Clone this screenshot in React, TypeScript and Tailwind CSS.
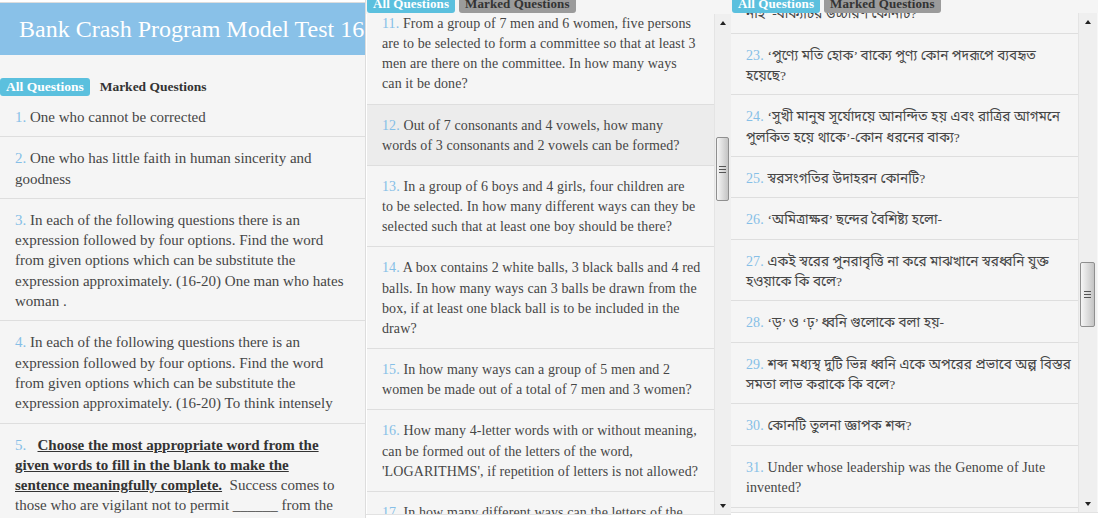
import React from 'react';

type Question = { n: number; lines: string[]; active?: boolean };

const Tabs: React.FC<{ grayMarked?: boolean; size: string }> = ({ grayMarked, size }) => (
  <div className={`flex gap-1 whitespace-nowrap ${size} font-bold leading-[18px]`}>
    <span className="rounded-[3px] bg-[#5bc0de] px-1.5 text-white">All Questions</span>
    <span className={grayMarked ? 'rounded-[3px] bg-[#9b9b9b] px-1.5 text-[#333]' : 'px-1.5 text-[#333]'}>
      Marked Questions
    </span>
  </div>
);

const Lines: React.FC<{ lines: string[] }> = ({ lines }) => (
  <>
    {lines.map((l, i) => (
      <React.Fragment key={i}>
        {i > 0 && <br />}
        {l}
      </React.Fragment>
    ))}
  </>
);

const QuestionRow: React.FC<Question & { leading: string; pad?: string; bangla?: boolean }> = ({
  n,
  lines,
  active,
  leading,
  pad = 'py-[10px]',
  bangla,
}) => (
  <div className={`border-b border-[#dedede] pl-[15px] pr-[6px] ${pad} ${leading} ${active ? 'bg-[#ececec]' : ''}`}>
    <span className="text-[#86bfe7]">{n}.</span>{' '}
    {bangla ? (
      <span className="text-[13.5px]">
        <Lines lines={lines} />
      </span>
    ) : (
      <Lines lines={lines} />
    )}
  </div>
);

const Arrow: React.FC<{ down?: boolean }> = ({ down }) => (
  <div className="flex h-[17px] items-center justify-center">
    <div
      className={
        down
          ? 'h-0 w-0 border-x-[3px] border-t-[4px] border-x-transparent border-t-[#222]'
          : 'h-0 w-0 border-x-[3px] border-b-[4px] border-x-transparent border-b-[#222]'
      }
    />
  </div>
);

// classic windows-style scrollbar, thumb placed by margin
const Scrollbar: React.FC<{ width: string; thumb: string }> = ({ width, thumb }) => (
  <div className={`flex ${width} shrink-0 flex-col border-l border-[#e4e4e4] bg-[#efefef]`}>
    <Arrow />
    <div className="flex-1 pl-px pr-[2px]">
      <div
        className={`${thumb} flex items-center justify-center rounded-[2px] border border-[#8f8f8f] bg-gradient-to-r from-[#f6f6f6] via-[#dddddd] to-[#c4c4c4]`}
      >
        <div className="flex flex-col gap-[2px]">
          <div className="h-px w-[7px] bg-[#555]" />
          <div className="h-px w-[7px] bg-[#555]" />
          <div className="h-px w-[7px] bg-[#555]" />
        </div>
      </div>
    </div>
    <Arrow down />
  </div>
);

const substituteIntro = [
  'In each of the following questions there is an',
  'expression followed by four options. Find the word',
  'from given options which can be substitute the',
];

const englishSet: Question[] = [
  { n: 1, lines: ['One who cannot be corrected'] },
  { n: 2, lines: ['One who has little faith in human sincerity and', 'goodness'] },
  { n: 3, lines: [...substituteIntro, 'expression approximately. (16-20) One man who hates', 'woman .'] },
  { n: 4, lines: [...substituteIntro, 'expression approximately. (16-20) To think intensely'] },
];

const mathSet: Question[] = [
  {
    n: 11,
    lines: [
      'From a group of 7 men and 6 women, five persons',
      'are to be selected to form a committee so that at least 3',
      'men are there on the committee. In how many ways',
      'can it be done?',
    ],
  },
  {
    n: 12,
    lines: ['Out of 7 consonants and 4 vowels, how many', 'words of 3 consonants and 2 vowels can be formed?'],
    active: true,
  },
  {
    n: 13,
    lines: [
      'In a group of 6 boys and 4 girls, four children are',
      'to be selected. In how many different ways can they be',
      'selected such that at least one boy should be there?',
    ],
  },
  {
    n: 14,
    lines: [
      'A box contains 2 white balls, 3 black balls and 4 red',
      'balls. In how many ways can 3 balls be drawn from the',
      'box, if at least one black ball is to be included in the',
      'draw?',
    ],
  },
  { n: 15, lines: ['In how many ways can a group of 5 men and 2', 'women be made out of a total of 7 men and 3 women?'] },
  {
    n: 16,
    lines: [
      'How many 4-letter words with or without meaning,',
      'can be formed out of the letters of the word,',
      "'LOGARITHMS', if repetition of letters is not allowed?",
    ],
  },
  {
    n: 17,
    lines: ['In how many different ways can the letters of the', "word 'LEADING' be arranged so that the vowels come together?"],
  },
];

const banglaSet: Question[] = [
  { n: 22, lines: ['‘সবার উপরে মানুষ সত্য, তাহার উপরে', 'নাই’ -বাক্যটির উচ্চারণ কোনটি?'] },
  { n: 23, lines: ['‘পুণ্যে মতি হোক’ বাক্যে পুণ্য কোন পদরূপে ব্যবহৃত', 'হয়েছে?'] },
  { n: 24, lines: ['‘সুখী মানুষ সূর্যোদয়ে আনন্দিত হয় এবং রাত্রির আগমনে', 'পুলকিত হয়ে থাকে’-কোন ধরনের বাক্য?'] },
  { n: 25, lines: ['স্বরসংগতির উদাহরন কোনটি?'] },
  { n: 26, lines: ['‘অমিত্রাক্ষর’ ছন্দের বৈশিষ্ট্য হলো-'] },
  { n: 27, lines: ['একই স্বরের পুনরাবৃত্তি না করে মাঝখানে স্বরধ্বনি যুক্ত', 'হওয়াকে কি বলে?'] },
  { n: 28, lines: ['‘ড়’ ও ‘ঢ়’ ধ্বনি গুলোকে বলা হয়-'] },
  { n: 29, lines: ['শব্দ মধ্যস্থ দুটি ভিন্ন ধ্বনি একে অপরের প্রভাবে অল্প বিস্তর', 'সমতা লাভ করাকে কি বলে?'] },
  { n: 30, lines: ['কোনটি তুলনা জ্ঞাপক শব্দ?'] },
];

export default function App() {
  return (
    <div className="flex h-[518px] w-[1098px] overflow-hidden bg-white font-['Liberation_Serif','Times_New_Roman','Noto_Sans_Bengali',serif] text-[#464646]">
      {/* first screen */}
      <div className="w-[366px] shrink-0 overflow-hidden border-r border-[#dddddd] bg-[#f5f5f5] text-[15px]">
        <div className="h-[3px] border-b border-[#dddddd] bg-white" />
        <div className="flex h-[52px] items-center whitespace-nowrap bg-[#89c1e8] pl-[19px] text-[24px] text-white">
          Bank Crash Program Model Test 16
        </div>
        <div className="pt-[23px]">
          <Tabs size="text-[13.5px]" />
        </div>
        {englishSet.map((q) => (
          <QuestionRow key={q.n} {...q} leading="leading-[20.3px]" pad="pt-[11px] pb-[9px]" />
        ))}
        <div className="pt-[11px] pb-[9px] pl-[15px] pr-[6px] leading-[20.3px]">
          <span className="text-[#86bfe7]">5.</span>&nbsp;&nbsp;&nbsp;
          <span className="font-bold text-[#333] underline">
            Choose the most appropriate word from the
            <br />
            given words to fill in the blank to make the
            <br />
            sentence meaningfully complete.
          </span>
          &nbsp; Success comes to
          <br />
          those who are vigilant not to permit ______ from the
          <br />
          wrong quarters.
        </div>
      </div>

      {/* second screen */}
      <div className="flex w-[365px] shrink-0 flex-col bg-[#f5f5f5] text-[14px] tracking-[0.1px]">
        <div className="h-[14px] overflow-hidden pl-px">
          <div className="-mt-[5px]">
            <Tabs grayMarked size="text-[13px]" />
          </div>
        </div>
        <div className="flex h-[500px]">
          <div className="flex-1 overflow-hidden border-l border-white">
            <div className="-mt-[11px]">
              {mathSet.map((q) => (
                <QuestionRow key={q.n} {...q} leading="leading-[20.15px]" pad="pt-[11px] pb-[9px]" />
              ))}
            </div>
          </div>
          <Scrollbar width="w-[17px]" thumb="mt-[106px] h-[64px]" />
        </div>
        <div className="flex-1 border-t border-[#e2e2e2] bg-white" />
      </div>

      {/* third screen */}
      <div className="flex w-[367px] shrink-0 flex-col bg-[#f5f5f5] text-[14px] tracking-[0.1px]">
        <div className="h-[13px] overflow-hidden pl-px">
          <div className="-mt-[5px]">
            <Tabs grayMarked size="text-[13px]" />
          </div>
        </div>
        <div className="flex h-[499px]">
          <div className="flex-1 overflow-hidden">
            <div className="-mt-[41px]">
              {banglaSet.map((q) => (
                <QuestionRow key={q.n} {...q} leading="leading-[20.35px]" pad="pt-[12px] pb-[8px]" bangla />
              ))}
              <QuestionRow
                n={31}
                lines={['Under whose leadership was the Genome of Jute', 'invented?']}
                leading="leading-[20.35px]"
                pad="pt-[12px] pb-[8px]"
              />
            </div>
          </div>
          <Scrollbar width="w-[19px]" thumb="mt-[232px] h-[65px]" />
          <div className="w-px bg-[#f7f7f7]" />
        </div>
        <div className="flex-1 border-t border-[#e2e2e2] bg-white" />
      </div>
    </div>
  );
}
